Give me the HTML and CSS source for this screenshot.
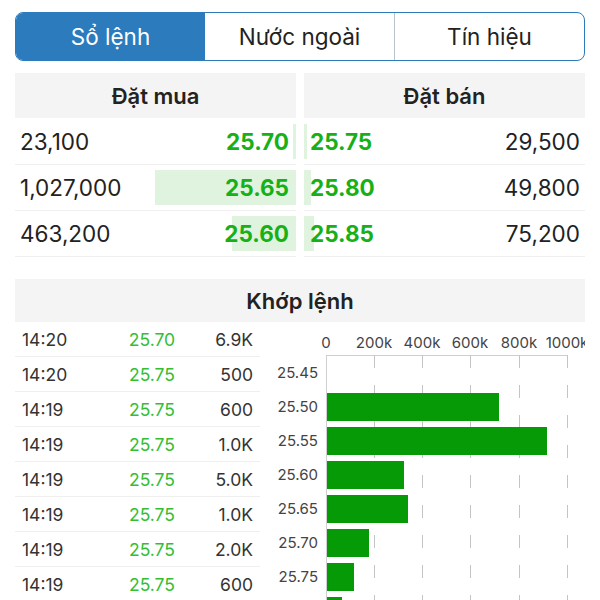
FILE: index.html
```html
<!DOCTYPE html>
<html lang="vi">
<head>
    <meta charset="UTF-8">
    <meta name="viewport" content="width=device-width, initial-scale=1.0">
    <title>Sổ lệnh</title>
    <link rel="stylesheet" href="styles.css">
</head>
<body>

<main class="page">
    <!-- Tabs -->
    <div class="tabs">
        <div class="tab active">Sổ lệnh</div>
        <div class="tab">Nước ngoài</div>
        <div class="tab">Tín hiệu</div>
    </div>

    <!-- Order book -->
    <div class="book">
        <div class="side buy">
            <div class="side-head">Đặt mua</div>
            <div class="book-row"><span class="depth" style="width: 3px"></span><span class="vol">23,100</span><span class="price">25.70</span></div>
            <div class="book-row"><span class="depth" style="width: 141px"></span><span class="vol">1,027,000</span><span class="price">25.65</span></div>
            <div class="book-row"><span class="depth" style="width: 64px"></span><span class="vol">463,200</span><span class="price">25.60</span></div>
        </div>
        <div class="side sell">
            <div class="side-head">Đặt bán</div>
            <div class="book-row"><span class="depth" style="width: 3px"></span><span class="price">25.75</span><span class="vol">29,500</span></div>
            <div class="book-row"><span class="depth" style="width: 7px"></span><span class="price">25.80</span><span class="vol">49,800</span></div>
            <div class="book-row"><span class="depth" style="width: 10px"></span><span class="price">25.85</span><span class="vol">75,200</span></div>
        </div>
    </div>

    <!-- Matched orders -->
    <div class="match-head">Khớp lệnh</div>
    <div class="match">
        <div class="trades">
            <div class="trade"><span>14:20</span><span class="t-price">25.70</span><span class="t-vol">6.9K</span></div>
            <div class="trade"><span>14:20</span><span class="t-price">25.75</span><span class="t-vol">500</span></div>
            <div class="trade"><span>14:19</span><span class="t-price">25.75</span><span class="t-vol">600</span></div>
            <div class="trade"><span>14:19</span><span class="t-price">25.75</span><span class="t-vol">1.0K</span></div>
            <div class="trade"><span>14:19</span><span class="t-price">25.75</span><span class="t-vol">5.0K</span></div>
            <div class="trade"><span>14:19</span><span class="t-price">25.75</span><span class="t-vol">1.0K</span></div>
            <div class="trade"><span>14:19</span><span class="t-price">25.75</span><span class="t-vol">2.0K</span></div>
            <div class="trade"><span>14:19</span><span class="t-price">25.75</span><span class="t-vol">600</span></div>
        </div>

        <svg class="chart" width="325" height="290" viewBox="0 0 325 290">
            <!-- x axis labels -->
            <g class="x-labels" text-anchor="middle">
                <text x="66" y="26">0</text>
                <text x="114" y="26">200k</text>
                <text x="162" y="26">400k</text>
                <text x="210" y="26">600k</text>
                <text x="259" y="26">800k</text>
                <text x="307" y="26">1000k</text>
            </g>
            <!-- grid -->
            <line x1="66" y1="33.5" x2="307" y2="33.5" stroke="#cfcfcf" stroke-width="1"/>
            <g stroke="#c4c4c4" stroke-width="1" stroke-dasharray="13 17">
                <line x1="114.5" y1="33" x2="114.5" y2="290"/>
                <line x1="162.5" y1="33" x2="162.5" y2="290"/>
                <line x1="210.5" y1="33" x2="210.5" y2="290"/>
                <line x1="259.5" y1="33" x2="259.5" y2="290"/>
                <line x1="307.5" y1="33" x2="307.5" y2="290"/>
            </g>
            <!-- bars -->
            <g fill="#079a07">
                <rect x="66" y="71" width="173" height="28"/>
                <rect x="66" y="105" width="221" height="28"/>
                <rect x="66" y="139" width="78" height="28"/>
                <rect x="66" y="173" width="82" height="28"/>
                <rect x="66" y="207" width="43" height="28"/>
                <rect x="66" y="241" width="28" height="28"/>
                <rect x="66" y="275" width="16" height="28"/>
            </g>
            <line x1="66.5" y1="33" x2="66.5" y2="290" stroke="#cfcfcf" stroke-width="1"/>
            <!-- y labels -->
            <g class="y-labels" text-anchor="end">
                <text x="58" y="56">25.45</text>
                <text x="58" y="90">25.50</text>
                <text x="58" y="124">25.55</text>
                <text x="58" y="158">25.60</text>
                <text x="58" y="192">25.65</text>
                <text x="58" y="226">25.70</text>
                <text x="58" y="260">25.75</text>
            </g>
        </svg>
    </div>
</main>

</body>
</html>
```

FILE: styles.css
```css
body {
    margin: 0;
    background-color: #fff;
    color: #222;
    font-family: Inter, "Liberation Sans", Arial, sans-serif;
    overflow: hidden;
}
.page {
    width: 570px;
    padding: 12px 15px 0;
}
.tabs {
    display: flex;
    height: 49px;
    border: 1px solid #2b7bbd;
    border-radius: 8px;
    overflow: hidden;
    box-sizing: border-box;
}
.tab {
    flex: 1;
    display: flex;
    align-items: center;
    justify-content: center;
    font-size: 22.5px;
    color: #222;
    border-left: 1px solid #b9c3cc;
}
.tab:first-child {
    border-left: none;
}
.tab.active {
    background-color: #2b7bbd;
    color: #fff;
}
.tab.active + .tab {
    border-left: none;
}
.book {
    display: flex;
    gap: 8px;
    margin-top: 12px;
}
.side {
    flex: 1;
}
.side-head {
    height: 45px;
    display: flex;
    align-items: center;
    justify-content: center;
    background-color: #f4f4f4;
    font-size: 22px;
    font-weight: 600;
    color: #222;
    margin-bottom: 1px;
}
.book-row {
    position: relative;
    height: 45px;
    display: flex;
    align-items: center;
    justify-content: space-between;
    border-bottom: 1px solid #efefef;
    font-size: 22.5px;
}
.buy .book-row {
    padding: 0 7px 0 5px;
}
.sell .book-row {
    padding: 0 5px 0 6px;
}
.depth {
    position: absolute; /* bar behind the price */
    top: 5px;
    bottom: 5px;
    background-color: #dff3df;
}
.buy .depth {
    right: 0;
}
.sell .depth {
    left: 0;
}
.vol, .price {
    position: relative;
}
.price {
    color: #17b017;
    font-weight: bold;
}
.match-head {
    margin-top: 22px;
    height: 43px;
    display: flex;
    align-items: center;
    justify-content: center;
    background-color: #f4f4f4;
    font-size: 22px;
    font-weight: 600;
    color: #222;
}
.match {
    display: flex;
}
.trades {
    width: 245px;
    flex: none;
}
.trade {
    display: grid;
    grid-template-columns: 90px 80px 1fr;
    align-items: center;
    height: 34px;
    padding: 0 7px;
    border-bottom: 1px solid #efefef;
    font-size: 17.5px;
    color: #333;
}
.t-price {
    color: #33be33;
    text-align: center;
}
.t-vol {
    text-align: right;
}
.chart {
    display: block;
    flex: none;
}
.chart text {
    font-family: Inter, "Liberation Sans", Arial, sans-serif;
    font-size: 15px;
    fill: #444;
}
```
